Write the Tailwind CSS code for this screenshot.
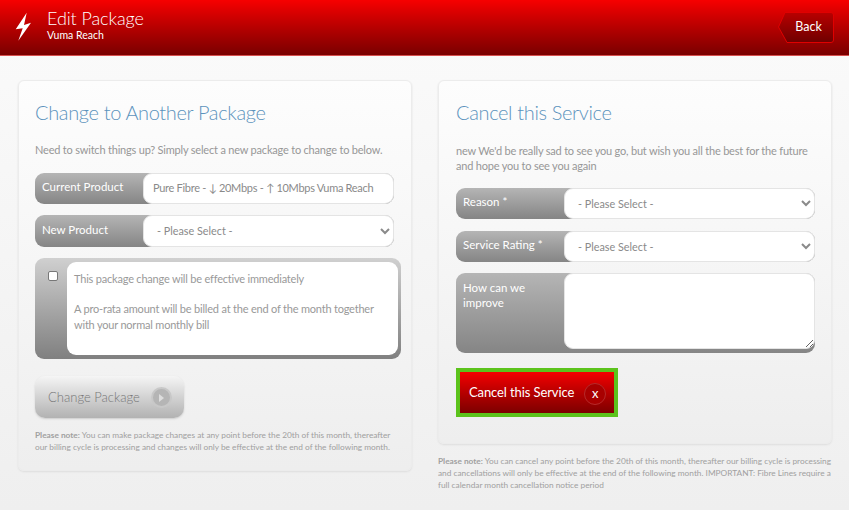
<!DOCTYPE html>
<html lang="en">
<head>
  <meta charset="UTF-8">
  <meta name="viewport" content="width=device-width, initial-scale=1.0">
  <title>Edit Package</title>
  <script src="https://cdn.jsdelivr.net/npm/@tailwindcss/browser@4"></script>
</head>
<body class="h-[510px] overflow-hidden bg-linear-to-b from-[#fbfbfb] to-[#efefef] font-['Lato',sans-serif] text-[#979797]">

  <!-- Header -->
  <header class="h-[56px] flex items-start bg-linear-to-b from-[#f70000] to-[#7a0000] border-b border-[#d9504f] text-white">
    <svg class="ml-[15px] mt-[12px] w-[17px] h-[30px]" viewBox="0 0 17 30" fill="#fff"><path d="M11.700 .7 L.7 17.300 L7.700 16.300 L3.300 28.700 L16 10.700 L9 13 Z"/></svg>
    <div class="ml-[15px] mt-[7px]">
      <div class="text-[18px] leading-[22px] font-light tracking-[-0.1px]">Edit Package</div>
      <div class="text-[10.500px] leading-[12px]">Vuma Reach</div>
    </div>
    <button class="relative ml-auto mr-[15px] mt-[12px] w-[56px] h-[31px] text-[12.500px] text-white">
      <svg class="absolute inset-0" width="56" height="31" viewBox="0 0 56 31"><defs><linearGradient id="back" x1="0" y1="0" x2="0" y2="1"><stop offset="0" stop-color="#b80000"/><stop offset="1" stop-color="#6f0000"/></linearGradient></defs><path d="M7 .5 H53 Q55.500 .5 55.500 3 V28 Q55.500 30.500 53 30.500 H9 L.5 15 Z" fill="url(#back)" stroke="#e00000"/></svg>
      <span class="relative pl-[5px]">Back</span>
    </button>
  </header>

  <main class="flex items-start gap-[26px] pl-[18px] pr-[17px] pt-[24px]">

    <!-- Left card -->
    <section class="w-[394px] h-[391px] px-[16px] pt-[17px] rounded-[6px] border border-[#ececec] bg-linear-to-b from-[#fdfdfd] to-[#eeeeee] shadow-[0_1px_2px_#ddd]">
      <h2 class="text-[20px] leading-[28px] font-light tracking-[-0.35px] text-[#5c93bd]">Change to Another Package</h2>
      <p class="mt-[16px] text-[11px] leading-[16px] tracking-[-0.2px] whitespace-nowrap">Need to switch things up? Simply select a new package to change to below.</p>

      <div class="mt-[15px] flex h-[31px] w-[359px] rounded-[9px] bg-linear-to-b from-[#b5b5b5] to-[#858585]">
        <label class="w-[108px] shrink-0 pl-[7px] pt-[6px] text-[11.500px] leading-[16px] whitespace-nowrap text-white">Current Product</label>
        <div class="flex-1 flex items-center pl-[9px] whitespace-nowrap rounded-[9px] bg-white border border-[#e4e4e4] text-[11px] tracking-[-0.3px] text-[#8a8a8a]">Pure Fibre - ↓ 20Mbps - ↑ 10Mbps Vuma Reach</div>
      </div>

      <div class="mt-[11px] flex h-[32px] w-[359px] rounded-[9px] bg-linear-to-b from-[#b5b5b5] to-[#858585]">
        <label class="w-[108px] shrink-0 pl-[7px] pt-[7px] text-[11.500px] leading-[16px] text-white">New Product</label>
        <select class="flex-1 pl-[9px] pr-[4px] pb-[1px] rounded-[9px] bg-white border border-[#e4e4e4] text-[10.800px] text-[#8a8a8a]"><option>- Please Select -</option></select>
      </div>

      <div class="mt-[11px] flex w-[366px] h-[101px] rounded-[9px] bg-linear-to-b from-[#d0d0d0] to-[#808080]">
        <div class="w-[32px] pl-[13px] pt-[13px]"><input type="checkbox" class="block w-[10px] h-[10px] appearance-none rounded-[2px] border border-[#777] bg-white"></div>
        <div class="w-[331px] h-[93px] mt-[4px] px-[7px] pt-[9px] rounded-[9px] bg-white text-[11px] leading-[16px] tracking-[-0.2px] text-[#999]">
          <p>This package change will be effective immediately</p>
          <p class="mt-[14px]">A pro-rata amount will be billed at the end of the month together with your normal monthly bill</p>
        </div>
      </div>

      <button class="mt-[17px] flex items-center w-[149px] h-[42px] pl-[13px] pt-[1px] rounded-[10px] bg-linear-to-b from-[#f5f5f5] to-[#b2b2b2] shadow-[0_1px_2px_#ccc] text-[13px] font-light whitespace-nowrap text-[#777]">
        Change Package
        <span class="ml-[11px] flex items-center justify-center w-[21px] h-[21px] rounded-full bg-[#b5b5b5] border-2 border-[#c8c8c8]"><svg width="5" height="8" viewBox="0 0 5 8"><path d="M0 0 L5 4 L0 8 Z" fill="#ddd"/></svg></span>
      </button>

      <p class="mt-[11px] w-[360px] text-[8.300px] leading-[12px] text-[#a0a0a0]"><b class="font-bold">Please note:</b> You can make package changes at any point before the 20th of this month, thereafter our billing cycle is processing and changes will only be effective at the end of the following month.</p>
    </section>

    <!-- Right column -->
    <div class="w-[394px]">
      <section class="h-[364px] px-[17px] pt-[17px] rounded-[6px] border border-[#ececec] bg-linear-to-b from-[#fdfdfd] to-[#eeeeee] shadow-[0_1px_2px_#ddd]">
        <h2 class="text-[20px] leading-[28px] font-light tracking-[-0.35px] text-[#5c93bd]">Cancel this Service</h2>
        <p class="mt-[17px] text-[11px] leading-[15px] tracking-[-0.2px]">new We'd be really sad to see you go, but wish you all the best for the future and hope you to see you again</p>

        <div class="mt-[15px] flex h-[31px] w-[359px] rounded-[9px] bg-linear-to-b from-[#b5b5b5] to-[#858585]">
          <label class="w-[108px] shrink-0 pl-[7px] pt-[6px] text-[11.500px] leading-[16px] text-white">Reason *</label>
          <select class="flex-1 pl-[9px] pr-[4px] pb-[1px] rounded-[9px] bg-white border border-[#e4e4e4] text-[10.800px] text-[#8a8a8a]"><option>- Please Select -</option></select>
        </div>

        <div class="mt-[12px] flex h-[31px] w-[359px] rounded-[9px] bg-linear-to-b from-[#b5b5b5] to-[#858585]">
          <label class="w-[108px] shrink-0 pl-[7px] pt-[6px] text-[11.500px] leading-[16px] text-white">Service Rating *</label>
          <select class="flex-1 pl-[9px] pr-[4px] pb-[1px] rounded-[9px] bg-white border border-[#e4e4e4] text-[10.800px] text-[#8a8a8a]"><option>- Please Select -</option></select>
        </div>

        <div class="mt-[11px] flex h-[80px] w-[359px] rounded-[9px] bg-linear-to-b from-[#b5b5b5] to-[#858585]">
          <label class="w-[92px] shrink-0 pl-[7px] pt-[7px] text-[11.500px] leading-[15px] text-white">How can we improve</label>
          <textarea class="ml-[16px] flex-1 h-[76px] rounded-[9px] bg-white border border-[#e4e4e4]"></textarea>
        </div>

        <button class="mt-[15px] flex items-center w-[162px] h-[49px] pl-[9px] border-[4px] border-[#5cc31c] bg-linear-to-b from-[#f50000] to-[#7d0000] text-[13px] tracking-[-0.1px] whitespace-nowrap text-white">
          Cancel this Service
          <span class="ml-[10px] flex items-center justify-center w-[22px] h-[22px] mt-[2px] rounded-full bg-[#a80000] border border-[#b52a2a] text-[13px] leading-none">x</span>
        </button>
      </section>
      <p class="mt-[11px] text-[8.300px] leading-[12px] text-[#a0a0a0]"><b class="font-bold">Please note:</b> You can cancel any point before the 20th of this month, thereafter our billing cycle is processing and cancellations will only be effective at the end of the following month. IMPORTANT: Fibre Lines require a full calendar month cancellation notice period</p>
    </div>
  </main>
</body>
</html>
